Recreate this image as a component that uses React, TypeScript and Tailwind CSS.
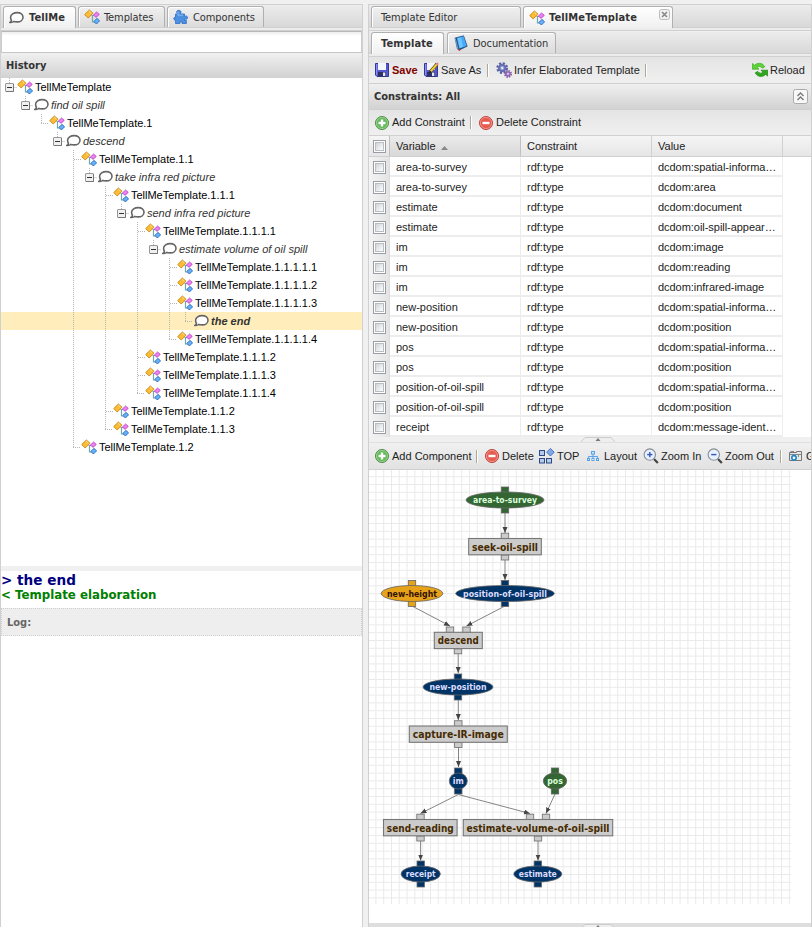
import React from 'react';

type Kids = { children?: React.ReactNode };

const tahoma = "font-['DejaVu_Sans_Condensed','DejaVu_Sans',sans-serif] [font-stretch:condensed]";

/* ---------- icons ---------- */

function TemplateIcon() {
  return (
    <svg width="16" height="16" viewBox="0 0 16 16" className="shrink-0">
      <path d="M7.5 6.5H10M8.5 6.5V13H11" fill="none" stroke="#6fa8a8" strokeWidth="1.2" />
      <path d="M5.4 1L9 4.2L4.2 9L0.7 5.6Z" fill="#fbbd36" stroke="#c98413" strokeWidth="0.9" />
      <path d="M5.3 2.2L7.4 4.2" stroke="#ffe39a" />
      <path d="M12.6 3L15.3 5.4L12 8.4L9.4 6Z" fill="#ee7ff0" stroke="#b13fc4" strokeWidth="0.8" />
      <path d="M13 9.4L15.6 11.8L12.4 15L9.8 12.4Z" fill="#66b1f7" stroke="#2566c2" strokeWidth="0.9" />
    </svg>
  );
}

function ChatIcon() {
  return (
    <svg width="16" height="16" viewBox="0 0 16 16" className="shrink-0">
      <path
        d="M8.2 2.6C11.6 2.6 14 4.5 14 7.2S11.6 11.9 8.2 11.9C6.8 11.9 5.8 11.8 4.8 11.5C3.8 12.3 2.6 12.6 1 12.4C2 11.7 2.5 10.9 2.4 10.1C1.7 9.3 1.6 8.3 1.6 7.2C1.6 4.5 4.8 2.6 8.2 2.6Z"
        fill="#fff" stroke="#666" strokeWidth="1.6"
      />
    </svg>
  );
}

function PuzzleIcon() {
  return (
    <svg width="16" height="16" viewBox="0 0 16 16" className="shrink-0">
      <path
        d="M3.6 3C3.6 0.8 8 0.8 8 3C8 4 7.4 4.2 7.6 5H11.5V7.4C12.4 7.6 12.8 6.8 13.6 7C15 7.6 14.8 10 13.4 10.2C12.6 10.4 12.2 9.8 11.5 10V11.5H13.4V14.5H9V12.8H7V14.5H2.5V11.2C2 10.8 1 11.2 0.8 10C0.6 8.4 2 8 2.5 8.4V5H4.4C4.6 4.2 3.6 4 3.6 3Z"
        fill="#4d8fe0" stroke="#2d6cc4" strokeWidth="0.8"
      />
      <path d="M5 2.6V6.2H10" fill="none" stroke="#8cbcf2" />
    </svg>
  );
}

function BookIcon() {
  return (
    <svg width="16" height="16" viewBox="0 0 16 16" className="shrink-0">
      <path d="M2 3L10.6 0.8L14.2 11.3L6.4 15L4.4 14Z" fill="#1d4f8c" stroke="#1b3f70" strokeWidth="0.6" />
      <path d="M3.8 3L10.6 1.3L13.6 11L6.4 13.6Z" fill="#45aaf8" />
      <path d="M4.6 3.2L8 2.4L10 11.8L6.6 13Z" fill="#6fc5ff" />
      <path d="M2.2 3.2L5 14" stroke="#8fb4d8" strokeWidth="0.8" />
      <path d="M6.4 14V15.6" stroke="#c22" strokeWidth="1.6" />
    </svg>
  );
}

function SaveIcon({ pencil }: { pencil?: boolean }) {
  return (
    <svg width="16" height="16" viewBox="0 0 16 16" className="shrink-0">
      <path d="M1.5 1.5H14.5V14.5H3L1.5 13Z" fill="#5458cc" stroke="#34379a" />
      <rect x="4" y="1" width="8" height="7" fill="#f4f6ff" />
      <rect x="4" y="10" width="8" height="4.5" fill="#2e3165" />
      <rect x="9" y="10.5" width="2.3" height="3.5" fill="#e4e7f5" />
      <rect x="2" y="2" width="1.2" height="11" fill="#8c90ee" />
      {pencil && (
        <>
          <path d="M7.4 9.6L14 2" stroke="#6b571a" strokeWidth="3.4" />
          <path d="M7.7 9.3L14 2.1" stroke="#f2d234" strokeWidth="2" />
          <path d="M13.4 2.8L15 1" stroke="#e98a7a" strokeWidth="2.4" />
          <path d="M5.8 11.2L6.8 8.6L8.5 10Z" fill="#222" />
        </>
      )}
    </svg>
  );
}

function GearsIcon() {
  return (
    <svg width="16" height="16" viewBox="0 0 16 16" className="shrink-0">
      <circle cx="6.2" cy="6" r="4.7" fill="none" stroke="#5a62a4" strokeWidth="2.4" strokeDasharray="2.1 1.59" />
      <circle cx="6.2" cy="6" r="3.2" fill="#8f97cf" stroke="#666eb2" strokeWidth="2" />
      <circle cx="6.2" cy="6" r="1.2" fill="#e6e8f6" />
      <circle cx="12" cy="11.9" r="3" fill="none" stroke="#80589f" strokeWidth="2" strokeDasharray="1.4 0.96" />
      <circle cx="12" cy="11.9" r="2" fill="#b58cd0" stroke="#8f66b6" strokeWidth="1.4" />
      <circle cx="12" cy="11.9" r="0.8" fill="#f0e6f6" />
    </svg>
  );
}

function ReloadIcon() {
  return (
    <svg width="16" height="16" viewBox="0 0 16 16" className="shrink-0">
      <path d="M0.4 1.4L2.6 3.2C5.5 0.4 10.8 0.6 12.8 4.8L10.3 6.2C8.8 4 6.8 4 5.2 5.4L7 7.2H0.4Z" fill="#5fd335" stroke="#3cae27" strokeWidth="0.7" />
      <path d="M15.8 14.1L13.6 12.4C10.5 15.6 5.2 15 3.2 10.8L5.9 9.4C7.4 11.6 9.4 11.6 11 10.2L9 8.2H15.8Z" fill="#30a61d" stroke="#228a15" strokeWidth="0.7" />
    </svg>
  );
}

function RoundIcon({ kind }: { kind: 'add' | 'del' }) {
  const add = kind === 'add';
  return (
    <svg width="16" height="16" viewBox="0 0 16 16" className="shrink-0">
      <circle cx="8" cy="8" r="6.5" fill={add ? '#66b85c' : '#e65b50'} stroke={add ? '#4a8c46' : '#bd4340'} />
      <circle cx="8" cy="8" r="5.6" fill="none" stroke={add ? '#a2d89b' : '#f39c92'} strokeWidth="0.8" />
      <rect x="4.5" y="6.8" width="7" height="2.4" fill="#fff" />
      {add && <rect x="6.8" y="4.5" width="2.4" height="7" fill="#fff" />}
    </svg>
  );
}

function TopIcon() {
  return (
    <svg width="16" height="16" viewBox="0 0 16 16" className="shrink-0">
      <g fill="#b6cbea" stroke="#2c4a86">
        <rect x="0.5" y="2.5" width="5" height="5" />
        <rect x="0.5" y="10.5" width="5" height="4.5" />
        <rect x="7.5" y="10.5" width="5" height="4.5" />
      </g>
      <path d="M11.4 0.4L15.2 4.2L11.4 8L7.6 4.2Z" fill="#7fa8e6" stroke="#3f6dba" strokeWidth="0.9" />
    </svg>
  );
}

function LayoutIcon() {
  return (
    <svg width="16" height="16" viewBox="0 0 16 16" className="shrink-0">
      <g fill="#cfe6fb" stroke="#5aa3ea">
        <rect x="5.5" y="3.5" width="3" height="2.6" />
        <rect x="1.5" y="10.5" width="2" height="2" />
        <rect x="6" y="10.5" width="2" height="2" />
        <rect x="10.5" y="10.5" width="2" height="2" />
        <path d="M7 6V10.5M2.5 10.5V8.5H11.5V10.5" fill="none" />
      </g>
    </svg>
  );
}

function ZoomIcon({ plus }: { plus?: boolean }) {
  return (
    <svg width="16" height="16" viewBox="0 0 16 16" className="shrink-0">
      <path d="M11 11L14.8 15" stroke="#444" strokeWidth="2.2" />
      <circle cx="6.8" cy="6.6" r="5.7" fill="#e6f0ff" stroke="#888c96" strokeWidth="1.1" />
      <path d="M4.2 6.6H9.4" stroke="#3457b8" strokeWidth="1.4" />
      {plus && <path d="M6.8 4V9.2" stroke="#3457b8" strokeWidth="1.4" />}
    </svg>
  );
}

function CameraIcon() {
  return (
    <svg width="16" height="16" viewBox="0 0 16 16" className="shrink-0">
      <path d="M1.5 4.5H8.5V3.5H13.5V12.5H1.5Z" fill="#e8e8e8" stroke="#777" />
      <path d="M2 6.5H13M2.5 3.5H6" stroke="#888" />
      <circle cx="6" cy="9.8" r="2.2" fill="#fff" stroke="#1c86c8" strokeWidth="1.6" />
      <path d="M10.5 7V9" stroke="#888" />
    </svg>
  );
}

/* ---------- chrome ---------- */

function Tab({ active, width, icon, close, children }: Kids & { active?: boolean; width: string; icon?: React.ReactNode; close?: boolean }) {
  return (
    <div
      className={`${width} ${active ? 'bg-gradient-to-b from-white to-[#f0f0f0] font-bold h-[22px] tracking-[0.13px]' : 'bg-gradient-to-b from-[#f0f0f0] to-[#dcdcdc] h-[21px] tracking-[-0.08px]'} relative flex shrink-0 items-center gap-[4px] rounded-t-[3px] border border-b-0 border-[#b0b0b0] text-[11px] text-[#333] shadow-[inset_1px_1px_0_#fff] ${icon ? 'pl-[5px]' : 'pl-[9px]'} ${tahoma}`}
    >
      {icon}
      <span className="whitespace-nowrap">{children}</span>
      {close && (
        <svg width="11" height="11" viewBox="0 0 11 11" className="absolute top-[2px] right-[2px]">
          <rect x="0.5" y="0.5" width="10" height="10" rx="2" fill="#f2f2f2" stroke="#bbb" />
          <path d="M3 3L8 8M8 3L3 8" stroke="#888" strokeWidth="1.6" />
        </svg>
      )}
    </div>
  );
}

function TabStrip({ children, inner }: Kids & { inner?: boolean }) {
  return (
    <div className="shrink-0">
      <div className={`flex ${inner ? 'h-[22px] gap-[3px]' : 'h-[23px] gap-[2px] pt-px'} border-b border-[#d0d0d0] bg-gradient-to-b from-[#ececec] to-[#d8d8d8] pl-[2px]`}>{children}</div>
      <div className="h-[3px] border-b border-[#d0d0d0] bg-[#ececec]" />
    </div>
  );
}

function Item({ icon, width, children }: Kids & { icon: React.ReactNode; width: string }) {
  return (
    <div className={`flex shrink-0 items-center gap-[2px] whitespace-nowrap ${width}`}>
      {icon}
      <span>{children}</span>
    </div>
  );
}

function Sep() {
  return <div className="h-[13px] w-[2px] shrink-0 border-r border-l border-r-white border-l-[#aca899]" />;
}

/* ---------- history tree ---------- */

type Row = { d: number; t: string; guides: number[]; end?: 'tee' | 'elbow' | 'minus'; chat?: boolean; sel?: boolean };

const rows: Row[] = [
  { d: 0, t: 'TellMeTemplate', guides: [], end: 'minus' },
  { d: 1, t: 'find oil spill', guides: [], end: 'minus', chat: true },
  { d: 2, t: 'TellMeTemplate.1', guides: [], end: 'elbow' },
  { d: 3, t: 'descend', guides: [], end: 'minus', chat: true },
  { d: 4, t: 'TellMeTemplate.1.1', guides: [], end: 'tee' },
  { d: 5, t: 'take infra red picture', guides: [4], end: 'minus', chat: true },
  { d: 6, t: 'TellMeTemplate.1.1.1', guides: [4], end: 'tee' },
  { d: 7, t: 'send infra red picture', guides: [4, 6], end: 'minus', chat: true },
  { d: 8, t: 'TellMeTemplate.1.1.1.1', guides: [4, 6], end: 'tee' },
  { d: 9, t: 'estimate volume of oil spill', guides: [4, 6, 8], end: 'minus', chat: true },
  { d: 10, t: 'TellMeTemplate.1.1.1.1.1', guides: [4, 6, 8], end: 'tee' },
  { d: 10, t: 'TellMeTemplate.1.1.1.1.2', guides: [4, 6, 8], end: 'tee' },
  { d: 10, t: 'TellMeTemplate.1.1.1.1.3', guides: [4, 6, 8], end: 'tee' },
  { d: 11, t: 'the end', guides: [4, 6, 8, 10], end: 'elbow', chat: true, sel: true },
  { d: 10, t: 'TellMeTemplate.1.1.1.1.4', guides: [4, 6, 8], end: 'elbow' },
  { d: 8, t: 'TellMeTemplate.1.1.1.2', guides: [4, 6], end: 'tee' },
  { d: 8, t: 'TellMeTemplate.1.1.1.3', guides: [4, 6], end: 'tee' },
  { d: 8, t: 'TellMeTemplate.1.1.1.4', guides: [4, 6], end: 'elbow' },
  { d: 6, t: 'TellMeTemplate.1.1.2', guides: [4], end: 'tee' },
  { d: 6, t: 'TellMeTemplate.1.1.3', guides: [4], end: 'elbow' },
  { d: 4, t: 'TellMeTemplate.1.2', guides: [], end: 'elbow' },
];

function TreeRow({ r }: { r: Row }) {
  return (
    <div className={`flex h-[18px] items-center pl-[4px] text-[11px] ${r.sel ? 'bg-[#ffeebb]' : ''}`}>
      {Array.from({ length: r.d }, (_, i) => (
        <svg key={i} width="16" height="18" className="shrink-0">
          {r.guides.includes(i) && <path d="M4.5 0V18" stroke="#b4b4b4" strokeDasharray="1 1" />}
        </svg>
      ))}
      <svg width="12" height="18" className="shrink-0">
        {r.end === 'minus' ? (
          <>
            <path d="M4.5 0V5M9.5 9.5H12" stroke="#b4b4b4" strokeDasharray="1 1" />
            <rect x="0.5" y="5.5" width="8" height="8" rx="0.5" fill="#f0f0f0" stroke="#979797" />
            <path d="M1 13.5H8.5V6" stroke="#777" fill="none" />
            <path d="M2 9.5H7" stroke="#333" />
          </>
        ) : (
          <path d={r.end === 'tee' ? 'M4.5 0V18M5 9.5H12' : 'M4.5 0V9M4 9.5H12'} fill="none" stroke="#b4b4b4" strokeDasharray="1 1" />
        )}
      </svg>
      {r.chat ? <span className="ml-px -mr-px"><ChatIcon /></span> : <TemplateIcon />}
      <span className={`ml-[2px] whitespace-nowrap ${r.chat ? 'text-[#333] italic' : 'tracking-[-0.01px] text-black'} ${r.sel ? 'font-bold' : ''}`}>{r.t}</span>
    </div>
  );
}

/* ---------- constraint grid ---------- */

const constraints: [string, string][] = [
  ['area-to-survey', 'dcdom:spatial-informa…'],
  ['area-to-survey', 'dcdom:area'],
  ['estimate', 'dcdom:document'],
  ['estimate', 'dcdom:oil-spill-appear…'],
  ['im', 'dcdom:image'],
  ['im', 'dcdom:reading'],
  ['im', 'dcdom:infrared-image'],
  ['new-position', 'dcdom:spatial-informa…'],
  ['new-position', 'dcdom:position'],
  ['pos', 'dcdom:spatial-informa…'],
  ['pos', 'dcdom:position'],
  ['position-of-oil-spill', 'dcdom:spatial-informa…'],
  ['position-of-oil-spill', 'dcdom:position'],
  ['receipt', 'dcdom:message-ident…'],
];

function Check() {
  return (
    <div className="size-[13px] border border-[#9a9ea4] bg-white p-px">
      <div className="size-full border border-[#b9bdc4] bg-gradient-to-br from-[#d0d3d8] to-white" />
    </div>
  );
}

/* ---------- component graph ---------- */

const NAVY = '#003366';
const GREEN = '#336633';
const GOLD = '#e6a219';

const variables = [
  { x: 505, y: 500, rx: 39, tw: 64, t: 'area-to-survey', f: GREEN, c: '#ddffdd' },
  { x: 412, y: 593.5, rx: 30.8, tw: 50, t: 'new-height', f: GOLD, c: '#331100' },
  { x: 505, y: 593.5, rx: 49.3, tw: 84, t: 'position-of-oil-spill', f: NAVY, c: '#ddddff' },
  { x: 458, y: 687, rx: 35, tw: 57, t: 'new-position', f: NAVY, c: '#ddddff' },
  { x: 458.3, y: 781, rx: 9, tw: 11, t: 'im', f: NAVY, c: '#ddddff' },
  { x: 555, y: 781, rx: 11.7, tw: 15.5, t: 'pos', f: GREEN, c: '#ddffdd' },
  { x: 420.7, y: 874, rx: 19.7, tw: 30, t: 'receipt', f: NAVY, c: '#ddddff' },
  { x: 537.8, y: 874, rx: 24, tw: 38, t: 'estimate', f: NAVY, c: '#ddddff' },
];

const components = [
  { x: 468.7, w: 72.6, y: 538.5, tw: 66, t: 'seek-oil-spill', ins: [505], out: 505 },
  { x: 434.3, w: 48, y: 632.3, tw: 41, t: 'descend', ins: [450, 466.5], out: 458 },
  { x: 409.3, w: 98, y: 726, tw: 91, t: 'capture-IR-image', ins: [458.3], out: 458.3 },
  { x: 383.5, w: 73.6, y: 819.5, tw: 67, t: 'send-reading', ins: [420.5], out: 420.5 },
  { x: 463.3, w: 149.4, y: 819.5, tw: 143, t: 'estimate-volume-of-oil-spill', ins: [530, 546], out: 538 },
];

const links = [
  [505, 513, 505, 533], [505, 560, 505, 580], [412, 606, 450, 626], [505, 606, 466.5, 626],
  [458.2, 653, 458.2, 673], [458.3, 700, 458.3, 720], [458.5, 747, 458.5, 767],
  [458.3, 794.5, 420.5, 813.5], [458.3, 794.5, 530, 813.5], [555, 794, 546, 813.5],
  [420.6, 841, 420.6, 860.5], [538, 841, 538, 860.5],
];

function Graph() {
  return (
    <svg width="442" height="453" viewBox="369 470 442 453" className={`block shrink-0 bg-white font-bold ${tahoma}`}>
      <defs>
        <pattern id="grid" x="367.6" y="476.2" width="7.8" height="7.8" patternUnits="userSpaceOnUse">
          <path d="M0 0.5H7.8M0.5 0V7.8" stroke="#eaeaea" fill="none" />
        </pattern>
        <marker id="arrow" markerUnits="userSpaceOnUse" markerWidth="7" markerHeight="6" refX="6" refY="2.5" orient="auto">
          <path d="M0 0L6 2.5L0 5Z" fill="#444" />
        </marker>
      </defs>
      <rect x="369" y="470" width="422" height="434" fill="url(#grid)" />
      {links.map(([a, b, c, d], i) => (
        <path key={i} d={`M${a} ${b}L${c} ${d}`} stroke="#777" strokeWidth="0.9" markerEnd="url(#arrow)" />
      ))}
      {variables.map((v) => (
        <g key={v.t}>
          <rect x={v.x - 3.7} y={v.y - 13} width="7.4" height="26" fill={v.f} stroke="#666" strokeWidth="0.8" />
          <ellipse cx={v.x} cy={v.y} rx={v.rx} ry="8" fill={v.f} stroke="#666" strokeWidth="0.8" />
          <text x={v.x - v.tw / 2} y={v.y + 3.2} fontSize="9" textLength={v.tw} lengthAdjust="spacingAndGlyphs" fill={v.c}>{v.t}</text>
        </g>
      ))}
      {components.map((n) => (
        <g key={n.t} fill="#ccc" stroke="#777" strokeWidth="0.9">
          {n.ins.map((p) => (
            <rect key={p} x={p - 3.7} y={n.y - 5.3} width="7.4" height="6" />
          ))}
          <rect x={n.out - 3.7} y={n.y + 16.5} width="7.4" height="5" />
          <rect x={n.x} y={n.y} width={n.w} height="16.3" strokeWidth="1.1" />
          <text x={n.x + n.w / 2 - n.tw / 2} y={n.y + 12} fontSize="10.4" textLength={n.tw} lengthAdjust="spacingAndGlyphs" fill="#472b00" stroke="none">{n.t}</text>
        </g>
      ))}
    </svg>
  );
}

function Splitter() {
  return (
    <svg width="34" height="5" viewBox="0 0 34 5">
      <path d="M0 5L4 0.5H30L34 5" fill="#eee" stroke="#ccc" />
      <path d="M14.5 4L17 1L19.5 4Z" fill="#777" />
    </svg>
  );
}

export default function App() {
  return (
    <div className="flex h-[927px] w-[812px] gap-[5px] overflow-hidden bg-[#f0f0f0] pt-[4px] font-['Liberation_Sans',Arial,sans-serif] text-[11px] leading-[13px] text-[#222]">
      <section className="flex w-[363px] shrink-0 flex-col border border-b-0 border-[#d0d0d0] bg-white">
        <TabStrip>
          <Tab active width="w-[73px]" icon={<ChatIcon />}>TellMe</Tab>
          <Tab width="w-[87px]" icon={<TemplateIcon />}>Templates</Tab>
          <Tab width="w-[97px]" icon={<PuzzleIcon />}>Components</Tab>
        </TabStrip>
        <div className="h-[22px] shrink-0 border border-t-[#b8b8b8] border-r-[#ccc] border-b-[#c5c5c5] border-l-[#ccc] bg-gradient-to-b from-[#eee] to-white to-20%" />
        <div className={`flex h-[25px] shrink-0 items-center bg-gradient-to-b from-[#f0f0f0] to-[#d2d2d2] pl-[5px] font-bold text-[#333] ${tahoma}`}>History</div>
        <div className="h-[488px] shrink-0">
          {rows.map((r) => <TreeRow key={r.t} r={r} />)}
        </div>
        <div className="h-[5px] shrink-0 bg-[#f0f0f0]" />
        <div className="flex h-[37px] shrink-0 flex-col font-['DejaVu_Sans',sans-serif] font-bold">
          <div className="h-[17px] text-[13.6px] leading-[19px] text-[#000080]">&gt; the end</div>
          <div className="text-[11.8px] leading-[14px] text-[#008000]">&lt; Template elaboration</div>
        </div>
        <div className={`flex h-[28px] shrink-0 items-center border border-dotted border-[#d0d0d0] bg-[#eee] pl-[5px] font-bold text-[#666] ${tahoma}`}>Log:</div>
      </section>

      <section className="flex w-[444px] shrink-0 flex-col border border-b-0 border-[#d0d0d0] bg-[#f0f0f0]">
        <TabStrip>
          <Tab width="w-[150px]">Template Editor</Tab>
          <Tab active close width="w-[150px]" icon={<TemplateIcon />}>TellMeTemplate</Tab>
        </TabStrip>
        <div className="pt-px">
          <TabStrip inner>
            <Tab active width="w-[73px]">Template</Tab>
            <Tab width="w-[109px]" icon={<BookIcon />}>Documentation</Tab>
          </TabStrip>
        </div>
        <div className="flex h-[27px] shrink-0 items-center border-b border-[#d0d0d0] bg-gradient-to-b from-[#e4e4e4] to-[#f0f0f0] pl-[5px]">
          <Item width="w-[49px]" icon={<SaveIcon />}><b className="text-[#800000]">Save</b></Item>
          <Item width="w-[64px]" icon={<SaveIcon pencil />}>Save As</Item>
          <Sep />
          <Item width="w-[149px] ml-[7px]" icon={<GearsIcon />}>Infer Elaborated Template</Item>
          <Sep />
          <Item width="w-[59px] ml-auto" icon={<ReloadIcon />}>Reload</Item>
        </div>
        <div className={`flex h-[26px] shrink-0 items-center justify-between border-b border-[#d0d0d0] bg-gradient-to-b from-[#f0f0f0] to-[#d2d2d2] pr-[3px] pl-[5px] font-bold text-[#333] ${tahoma}`}>
          <span>Constraints: All</span>
          <svg width="15" height="15" viewBox="0 0 15 15">
            <rect x="0.5" y="0.5" width="14" height="14" rx="2" fill="#f8f8f8" stroke="#aaa" />
            <path d="M4.5 7L7.5 4L10.5 7M4.5 11L7.5 8L10.5 11" fill="none" stroke="#777" strokeWidth="1.3" />
          </svg>
        </div>
        <div className="flex h-[26px] shrink-0 items-center border-b border-[#d0d0d0] bg-gradient-to-b from-[#e4e4e4] to-[#f0f0f0] pl-[5px]">
          <Item width="w-[96px]" icon={<RoundIcon kind="add" />}>Add Constraint</Item>
          <Sep />
          <Item width="w-[110px] ml-[6px]" icon={<RoundIcon kind="del" />}>Delete Constraint</Item>
        </div>

        <div className="flex h-[21px] shrink-0 items-stretch border-b border-[#d0d0d0] bg-gradient-to-b from-[#f5f5f5] to-[#e6e6e6]">
          <div className="flex w-[21px] items-center justify-center border-r border-[#c0c0c0]"><Check /></div>
          <div className="flex w-[131px] items-center gap-[5px] border-r border-[#c0c0c0] bg-gradient-to-b from-[#ebebeb] to-[#d8d8d8] pt-px pl-[6px]">
            Variable
            <svg width="7" height="4" className="mt-[3px]"><path d="M0 4L3.5 0L7 4Z" fill="#888" /></svg>
          </div>
          <div className="flex w-[131px] items-center border-r border-[#d0d0d0] pt-px pl-[6px]">Constraint</div>
          <div className="flex w-[131px] items-center border-r border-[#d0d0d0] pt-px pl-[6px]">Value</div>
        </div>
        <div className="h-[280px] shrink-0 bg-white">
          {constraints.map(([v, value], i) => (
            <div key={i} className="flex h-[20px] w-[414px] items-stretch border-b-2 border-[#ededed]">
              <div className="-mb-[2px] flex w-[21px] items-center justify-center border-r border-[#ddd] bg-gradient-to-r from-[#f4f4f4] to-[#e4e4e4]"><Check /></div>
              <div className="flex w-[131px] items-center border-r border-[#ededed] pt-[2px] pl-[6px]">{v}</div>
              <div className="flex w-[131px] items-center border-r border-[#ededed] pt-[2px] pl-[6px]">rdf:type</div>
              <div className="flex w-[131px] items-center border-r border-[#ededed] pt-[2px] pl-[6px] whitespace-nowrap tracking-[-0.04px]">{value}</div>
            </div>
          ))}
        </div>
        <div className="flex h-[6px] shrink-0 items-end justify-center border-b border-[#e0e0e0] bg-[#f0f0f0] pl-[16px]"><Splitter /></div>
        <div className="flex h-[27px] shrink-0 items-center overflow-hidden border-b border-[#d0d0d0] bg-gradient-to-b from-[#f0f0f0] to-[#e2e2e2] pl-[5px]">
          <Item width="w-[102px]" icon={<RoundIcon kind="add" />}>Add Component</Item>
          <Sep />
          <Item width="w-[55px] ml-[6px]" icon={<RoundIcon kind="del" />}>Delete</Item>
          <Item width="w-[47px]" icon={<TopIcon />}>TOP</Item>
          <Item width="w-[57px]" icon={<LayoutIcon />}>Layout</Item>
          <Item width="w-[64px]" icon={<ZoomIcon plus />}>Zoom In</Item>
          <Item width="w-[73px]" icon={<ZoomIcon />}>Zoom Out</Item>
          <Sep />
          <Item width="w-[26px] ml-[6px]" icon={<CameraIcon />}>G</Item>
        </div>
        <Graph />
        <div className="flex h-[6px] shrink-0 items-end justify-center bg-[#dedede] pl-[16px]"><Splitter /></div>
      </section>
    </div>
  );
}
